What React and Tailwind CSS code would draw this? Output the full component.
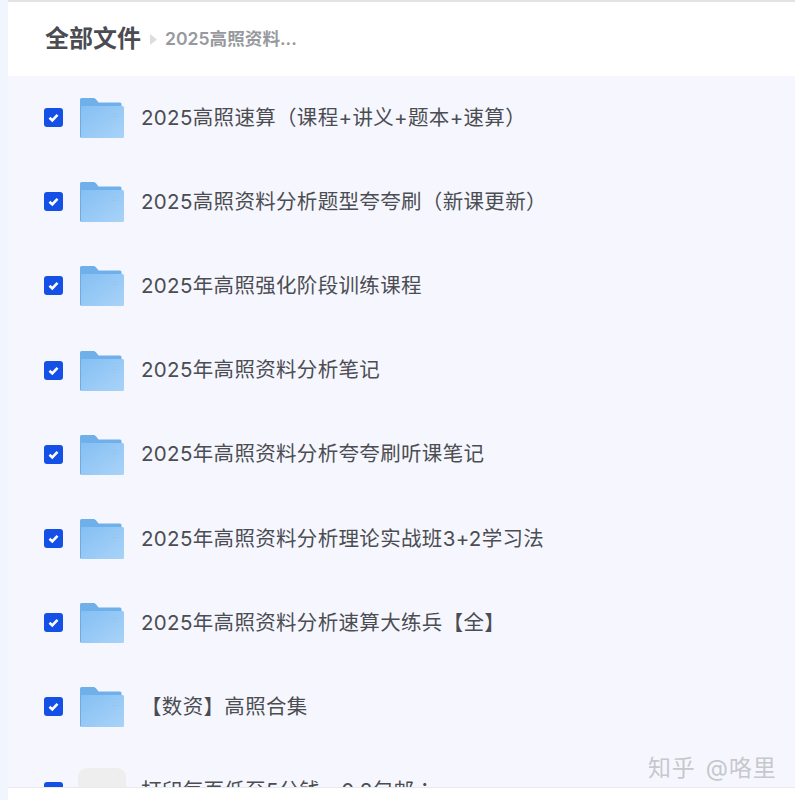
const files = [
  "2025高照速算（课程+讲义+题本+速算）",
  "2025高照资料分析题型夸夸刷（新课更新）",
  "2025年高照强化阶段训练课程",
  "2025年高照资料分析笔记",
  "2025年高照资料分析夸夸刷听课笔记",
  "2025年高照资料分析理论实战班3+2学习法",
  "2025年高照资料分析速算大练兵【全】",
  "【数资】高照合集",
];

const FolderIcon = () => (
  <svg width="44" height="40" viewBox="0 0 44 40" className="shrink-0">
    <defs>
      <linearGradient id="folderFront" x1="0" y1="0" x2="1" y2="1">
        <stop offset="0" stopColor="#84bff3" />
        <stop offset="1" stopColor="#a9d3f8" />
      </linearGradient>
    </defs>
    <path d="M0 1.500A1.500 1.500 0 0 1 1.500 0H13c1.500 0 2.500 .6 3.400 1.700L18.500 4.500H40A1.500 1.500 0 0 1 41.500 6V12H0Z" fill="#6fb0ea" />
    <path d="M0 8H42.500A1.500 1.500 0 0 1 44 9.500V38.500A1.500 1.500 0 0 1 42.500 40H1.500A1.500 1.500 0 0 1 0 38.500Z" fill="url(#folderFront)" />
    <path d="M0.500 8V39" stroke="#6fabe3" strokeWidth="1" />
    <path d="M32 15.500H38M32 18.500H38" stroke="#94c6f0" strokeWidth="1" />
  </svg>
);

const Checkbox = () => (
  <div className="mb-[1px] flex h-[19px] w-[19px] shrink-0 items-center justify-center rounded-[3px] bg-[#1450e6]">
    <svg width="13" height="13" viewBox="0 0 13 13" fill="none">
      <path d="M2.500 6.800L5.300 9.500L10.500 3.800" stroke="#ffffff" strokeWidth="2.600" />
    </svg>
  </div>
);

const FileRow = ({ name, icon }) => (
  <div className="flex h-[84.2px] shrink-0 items-center pl-[36px]">
    <Checkbox />
    <div className="mx-[17px] flex w-[44px] shrink-0 justify-center">{icon}</div>
    <span className="whitespace-nowrap text-[20.5px] tracking-[0.33px] text-[#4b4d52]">{name}</span>
  </div>
);

export default function App() {
  return (
    <div className="relative flex h-[800px] w-[795px] overflow-hidden bg-white font-['Inter','Noto_Sans_CJK_SC',sans-serif]">
      <div className="w-[8px] shrink-0 bg-[#f1f5fe]" />
      <div className="flex min-w-0 flex-1 flex-col">
        <div className="h-[2px] shrink-0 bg-[#e2e3e6]" />
        <header className="flex h-[74px] shrink-0 items-center pl-[37px]">
          <span className="text-[24px] font-bold text-[#4a4c51]">全部文件</span>
          <svg width="7" height="11" viewBox="0 0 7 11" className="ml-[9px] mr-[9px]">
            <path d="M0 0L7 5.500L0 11Z" fill="#dcdde0" />
          </svg>
          <span className="-ml-[1px] text-[17.6px] font-semibold text-[#97999e]">2025高照资料...</span>
        </header>
        <main className="flex h-[711px] flex-col overflow-hidden bg-[#f6f7fe]">
          {files.map((name) => (
            <FileRow key={name} name={name} icon={<FolderIcon />} />
          ))}
          <FileRow
            name={
              <>
                打印每页低至5分钱，0.8包邮
                <span className="font-['Inter','Noto_Sans_CJK_TC',sans-serif]">：</span>
              </>
            }
            icon={<div className="h-[48px] w-[48px] shrink-0 rounded-[9px] bg-[#eeeeee]" />}
          />
        </main>
        <div className="flex-1 border-t border-[#e9eaee] bg-white" />
      </div>
      <div className="absolute left-[648px] top-[751px] whitespace-nowrap text-[23px] tracking-[0.8px] text-[#c6c8cc] [word-spacing:3px]">知乎 @咯里</div>
    </div>
  );
}
